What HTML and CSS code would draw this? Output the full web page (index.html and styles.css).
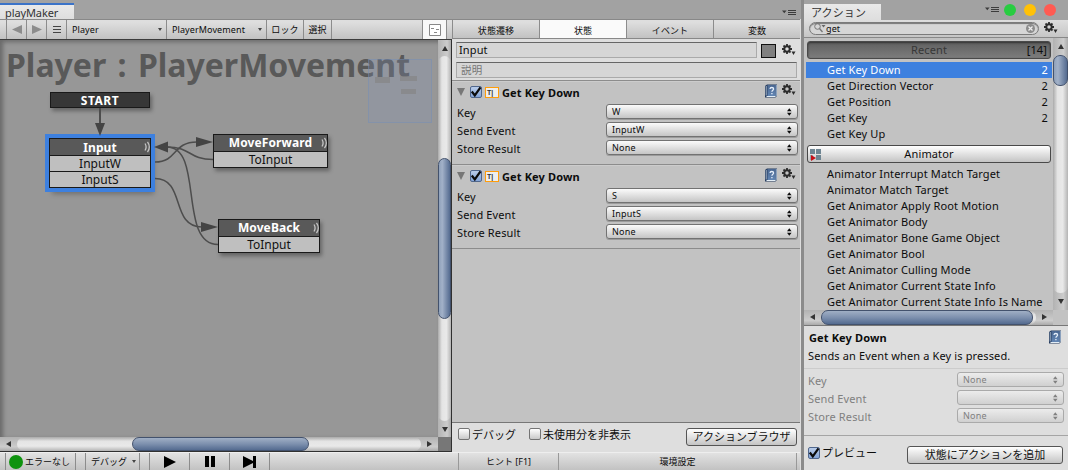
FILE: index.html
```html
<!DOCTYPE html>
<html lang="ja">
<head>
<meta charset="utf-8">
<title>playMaker</title>
<link rel="stylesheet" href="styles.css">
</head>
<body>
<svg class="defs" width="0" height="0">
  <defs>
    <symbol id="gear" viewBox="0 0 14 13">
      <circle cx="5" cy="5" r="2.700" fill="none" stroke="#2c2c2c" stroke-width="1.900"/>
      <g stroke="#2c2c2c" stroke-width="1.800"><path d="M5 0v2M5 8v2M0 5h2M8 5h2M1.500 1.500l1.400 1.400M7.100 7.100l1.400 1.400M8.500 1.500L7.100 2.900M2.900 7.100L1.500 8.500"/></g>
      <path d="M9.500 7.500h4L11.500 11z" fill="#2c2c2c"/>
    </symbol>
    <linearGradient id="bookfill" x1="0" y1="0" x2="0" y2="1"><stop offset="0" stop-color="#4a6791"/><stop offset="1" stop-color="#6286b4"/></linearGradient>
    <symbol id="book" viewBox="0 0 14 14">
      <path d="M1 2L3 .5H13v11.300L11.500 13.500H1z" fill="#263c5e"/>
      <path d="M3.500 1h8.200V12H3.500z" fill="url(#bookfill)"/>
      <path d="M2.200 2v9.500" stroke="#c3d3e6" stroke-width=".8"/>
      <path d="M2.500 12.500H11.300l1-1" fill="none" stroke="#e3edf5" stroke-width="1"/>
      <path d="M12.300 1v10.500" stroke="#a6bbd5"/>
      <path d="M6 5c.1-2 3.600-2 3.600.1 0 1.200-1.700 1.200-1.700 2.700M7.900 9v1.300" fill="none" stroke="#e6effa" stroke-width="1.300"/>
    </symbol>
    <symbol id="check" viewBox="0 0 14 14"><path d="M2.800 6.500l3 3.900L11.500 2.300" fill="none" stroke="#0b0b0b" stroke-width="2.200"/></symbol>
    <symbol id="updown" viewBox="0 0 5 8"><path d="M0 3.200h4.600L2.300 .2zM0 4.800h4.600L2.300 7.800z" fill="currentColor"/></symbol>
    <symbol id="menu" viewBox="0 0 14 7"><path d="M0 1.500h4.600L2.300 4.200z" fill="#3c3c3c"/><path d="M6 1.500h8M6 3.500h8M6 5.500h8" stroke="#3c3c3c" stroke-width="1"/></symbol>
    <symbol id="waves" viewBox="0 0 8 12"><path d="M2 2.500q2.200 3.500 0 7M4.500 .8q3.600 5 0 10.400" fill="none" stroke="#c4c4c4" stroke-width="1.300"/></symbol>
  </defs>
</svg>
<div class="app">
  <section class="main">
    <header class="tabbar"><div class="tab tab-active">playMaker</div><svg class="tab-menu" width="14" height="7"><use href="#menu"/></svg></header>
    <div class="panes">
      <div class="graph-pane">
        <div class="toolbar">
          <span class="cell pad"></span>
          <span class="cell nav"><svg width="10" height="9"><path d="M0 4.500L10 0v9z" fill="#8c8c8c"/></svg></span>
          <span class="cell nav"><svg width="10" height="9"><path d="M10 4.500L0 0v9z" fill="#8c8c8c"/></svg></span>
          <span class="cell nav"><svg width="8" height="7"><path d="M0 .5h8M0 3.500h8M0 6.500h8" stroke="#444"/></svg></span>
          <span class="cell drop">Player<i class="caret"></i></span>
          <span class="cell drop">PlayerMovement<i class="caret"></i></span>
          <span class="cell lock">ロック</span>
          <span class="cell select">選択</span>
          <span class="cell spacer"></span>
          <span class="cell minimap-toggle"><svg width="12" height="12"><path d="M.5 .5h11v11H.5z" fill="#fff" stroke="#888"/><path d="M2 4.500h3M7 5.500h3M5 8.500h3" stroke="#888"/></svg></span>
        </div>
        <div class="graph">
          <div class="canvas">
            <div class="graph-title">Player : PlayerMovement</div>
            <div class="node start">START</div>
            <div class="node n-input"><div class="state">Input<svg class="waves" width="8" height="12"><use href="#waves"/></svg></div><div class="event">InputW</div><div class="event">InputS</div></div>
            <div class="node n-forward"><div class="state">MoveForward<svg class="waves" width="8" height="12"><use href="#waves"/></svg></div><div class="event">ToInput</div></div>
            <div class="node n-back"><div class="state">MoveBack<svg class="waves" width="8" height="12"><use href="#waves"/></svg></div><div class="event">ToInput</div></div>
            <svg class="edges" width="438" height="397">
              <g fill="none" stroke="#4d4d4d" stroke-width="1.500">
                <path d="M100 68V86" stroke-width="2"/>
                <path d="M155 122C178 122 172 102 197 102"/>
                <path d="M213 119.500C188 119.500 192 107 167 107"/>
                <path d="M155 138.500C186 138.500 170 187 202 187"/>
                <path d="M218 204.500C178 204.500 204 107 167 107"/>
              </g>
              <g fill="#444"><path d="M95 83h10l-5 13z"/><path d="M196 97l17 5-17 5z"/><path d="M168 101.500v11L154 107z"/><path d="M201 182l17 5-17 5z"/></g>
            </svg>
            <div class="minimap"><i class="m1"></i><i class="m2"></i><i class="m3"></i></div>
          </div>
          <div class="vscroll graph-v"><b class="arrow up"></b><div class="track"><div class="thumb"></div></div><b class="arrow down"></b></div>
          <div class="hscroll graph-h"><b class="arrow left"></b><div class="track"><div class="thumb"></div></div><b class="arrow right"></b></div>
          <div class="corner"></div>
        </div>
        <div class="statusbar">
          <span class="cell st-pad"></span>
          <span class="cell st-error"><i class="dot"></i>エラーなし</span>
          <span class="cell st-gap"></span>
          <span class="cell st-debug">デバッグ<i class="caret"></i></span>
          <span class="cell st-gap"></span>
          <span class="cell st-btn"><svg width="12" height="12"><path d="M0 0l12 6-12 6z"/></svg></span>
          <span class="cell st-btn"><svg width="10" height="11"><path d="M0 0h4v11H0zM6 0h4v11H6z"/></svg></span>
          <span class="cell st-btn"><svg width="13" height="12"><path d="M0 0l10 5V0h3v12h-3V7L0 12z"/></svg></span>
        </div>
      </div>

      <div class="inspector">
        <nav class="tabs"><span>状態遷移</span><span class="on">状態</span><span>イベント</span><span>変数</span></nav>
        <div class="state-head">
          <div class="line"><div class="field name">Input</div><i class="swatch"></i><svg width="14" height="13"><use href="#gear"/></svg></div>
          <div class="field desc">説明</div>
        </div>
        <div class="action">
          <div class="action-title"><i class="fold"></i><span class="check on"><svg width="14" height="14"><use href="#check"/></svg></span><span class="kind">T|</span><strong>Get Key Down</strong><svg class="book" width="14" height="14"><use href="#book"/></svg><svg class="gear" width="14" height="13"><use href="#gear"/></svg></div>
          <div class="prop"><label>Key</label><div class="popup">W<svg width="5" height="8"><use href="#updown"/></svg></div></div>
          <div class="prop"><label>Send Event</label><div class="popup">InputW<svg width="5" height="8"><use href="#updown"/></svg></div></div>
          <div class="prop"><label>Store Result</label><div class="popup">None<svg width="5" height="8"><use href="#updown"/></svg></div></div>
        </div>
        <div class="action">
          <div class="action-title"><i class="fold"></i><span class="check on"><svg width="14" height="14"><use href="#check"/></svg></span><span class="kind">T|</span><strong>Get Key Down</strong><svg class="book" width="14" height="14"><use href="#book"/></svg><svg class="gear" width="14" height="13"><use href="#gear"/></svg></div>
          <div class="prop"><label>Key</label><div class="popup">S<svg width="5" height="8"><use href="#updown"/></svg></div></div>
          <div class="prop"><label>Send Event</label><div class="popup">InputS<svg width="5" height="8"><use href="#updown"/></svg></div></div>
          <div class="prop"><label>Store Result</label><div class="popup">None<svg width="5" height="8"><use href="#updown"/></svg></div></div>
        </div>
        <div class="blank"></div>
        <div class="options"><span class="check"></span><label class="o1">デバッグ</label><span class="check"></span><label>未使用分を非表示</label><button class="btn browser">アクションブラウザ</button></div>
        <div class="hints"><span class="hint-pad"></span><span class="hint">ヒント [F1]</span><span class="prefs">環境設定</span><span class="hint-end"></span></div>
      </div>
    </div>
  </section>

  <section class="browser-window">
    <header class="tabbar"><div class="tab">アクション</div><svg class="tab-menu" width="14" height="7"><use href="#menu"/></svg><i class="light green"></i><i class="light yellow"></i><i class="light red"></i></header>
    <div class="searchbar">
      <div class="search"><svg width="12" height="10"><circle cx="3.500" cy="3.500" r="2.800" fill="none" stroke="#777"/><path d="M5.500 5.500L8.500 9" stroke="#777" stroke-width="1.300"/><path d="M7.500 2h4L9.500 4.500z" fill="#666"/></svg><span>get</span><svg class="clear" width="9" height="9"><circle cx="4.500" cy="4.500" r="4.500" fill="#8c8c8c"/><path d="M2.500 2.500l4 4M6.500 2.500l-4 4" stroke="#eee" stroke-width="1.300"/></svg></div>
      <svg width="14" height="13"><use href="#gear"/></svg>
    </div>
    <div class="list-area">
      <div class="list">
        <div class="cat recent"><span>Recent</span><em>[14]</em></div>
        <ul>
          <li class="sel">Get Key Down<em>2</em></li><li>Get Direction Vector<em>2</em></li><li>Get Position<em>2</em></li><li>Get Key<em>2</em></li><li>Get Key Up</li>
        </ul>
        <div class="cat btn-cat"><svg width="12" height="12"><path d="M0 0h5v5H0zM6 0h5v5H6zM6 6h5v5H6z" fill="#6e8592"/><path d="M0 6h3v5H0z" fill="#9aa5ab"/><path d="M1 6l5 3-5 3z" fill="#c80f17"/></svg><span>Animator</span></div>
        <ul>
          <li>Animator Interrupt Match Target</li><li>Animator Match Target</li><li>Get Animator Apply Root Motion</li><li>Get Animator Body</li><li>Get Animator Bone Game Object</li><li>Get Animator Bool</li><li>Get Animator Culling Mode</li><li>Get Animator Current State Info</li><li>Get Animator Current State Info Is Name</li>
        </ul>
      </div>
      <div class="vscroll list-v"><b class="arrow up"></b><div class="track"><div class="thumb"></div></div><b class="arrow down"></b></div>
      <div class="hscroll list-h"><b class="arrow left"></b><div class="track"><div class="thumb"></div></div><b class="arrow right"></b></div>
      <div class="corner"></div>
    </div>
    <div class="about">
      <div class="about-title"><strong>Get Key Down</strong><svg width="14" height="14"><use href="#book"/></svg></div>
      <p>Sends an Event when a Key is pressed.</p>
    </div>
    <div class="preview">
      <div class="prop"><label>Key</label><div class="popup">None<svg width="5" height="8"><use href="#updown"/></svg></div></div>
      <div class="prop"><label>Send Event</label><div class="popup"><svg width="5" height="8"><use href="#updown"/></svg></div></div>
      <div class="prop"><label>Store Result</label><div class="popup">None<svg width="5" height="8"><use href="#updown"/></svg></div></div>
    </div>
    <div class="add"><span class="check on"><svg width="14" height="14"><use href="#check"/></svg></span><label>プレビュー</label><button class="btn">状態にアクションを追加</button></div>
  </section>
</div>
</body>
</html>
```
FILE: styles.css
```css
* { box-sizing: border-box; }
body { margin: 0; background: #a2a2a2; color: #0c0c0c; font: 11px/14px "Noto Sans", "Noto Sans CJK JP", sans-serif; letter-spacing: .13px; white-space: nowrap; overflow: hidden; }
svg { display: block; flex: none; overflow: visible; }
i, em { font-style: normal; }
.defs { position: absolute; }
.app { display: flex; width: 1068px; height: 470px; }
.main { display: flex; flex-direction: column; width: 804px; border-right: 3px solid #8b8b8b; background: #a2a2a2; }
.tabbar { display: flex; align-items: flex-end; height: 19px; background: #a2a2a2; }
.tab { height: 15px; padding: 1px 0 0 7px; width: 74px; background: linear-gradient(#e9e9e9, #dedede); color: #333; line-height: 15px; }
.tab-active { border-top: 1px solid #3b73c8; box-shadow: 0 -1px #3b73c8; padding: 0 0 0 5px; letter-spacing: -.1px; }
.tab-menu { margin: 0 5px 3px auto; }
.panes { display: flex; height: 451px; }
.graph-pane { display: flex; flex-direction: column; width: 452px; }
.inspector { display: flex; flex-direction: column; width: 349px; border-right: 1px solid #ddd; background: #c2c2c2; }
.toolbar, .tabs, .statusbar, .hints { display: flex; flex: none; background: linear-gradient(#e2e2e2, #c2c2c2); }
.toolbar, .tabs { height: 20px; border-top: 1px solid #888; border-bottom: 1px solid #888; box-shadow: inset 0 2px #dedede; font-size: 9px; line-height: 21px; letter-spacing: .1px; }
.toolbar { border-bottom: 0; }
.cell { display: flex; align-items: center; border-right: 1px solid #8c8c8c; flex: none; }
.pad { width: 7px; }
.nav { width: 20px; justify-content: center; }
.drop { width: 100px; padding: 0 4px 0 5px; justify-content: space-between; }
.caret { border: 2px solid transparent; border-top: 3px solid #444; border-bottom: 0; }
.lock { width: 37px; justify-content: center; }
.select { width: 28px; justify-content: center; }
.spacer { width: 91px; }
.minimap-toggle { width: 24px; justify-content: center; background: #f8f8f8; }
.graph { display: grid; grid-template: 397px 14px / 438px 13px; width: 452px; height: 413px; border-top: 1px solid #3c3c3c; border-right: 1px solid #303030; border-bottom: 2px solid #303030; background: #979797; }
.canvas { position: relative; overflow: hidden; background: #979797; box-shadow: inset 3px 2px 4px #6a6a6a; }
.graph-title { position: absolute; left: 6px; top: 0; color: #595959; font-size: 32px; line-height: 50px; font-weight: 700; letter-spacing: 0; word-spacing: 3px; }
.node { position: absolute; border: 1px solid #191919; background: #191919; color: #111; font-size: 12px; text-align: center; letter-spacing: 0; box-shadow: 2px 3px 4px #0005; }
.start { left: 50px; top: 52px; width: 100px; height: 16px; background: #373737; color: #fff; font-weight: 700; line-height: 15px; letter-spacing: .5px; }
.state { height: 16px; background: #595959; color: #fff; font-weight: 700; line-height: 15px; letter-spacing: .1px; }
.event { height: 15px; margin-top: 1px; background: #bfbfbf; line-height: 15px; }
.waves { position: absolute; right: -1px; top: 2px; }
.n-input { left: 49px; top: 98px; width: 102px; height: 50px; padding-right: 0; box-shadow: 0 0 0 4px #3d80df, 3px 6px 5px #0004; }
.n-input .state { line-height: 17px; }
.n-forward { left: 213px; top: 94px; width: 115px; height: 34px; }
.n-back { left: 218px; top: 179px; width: 102px; height: 34px; }
.edges { position: absolute; left: 0; top: 0; }
.minimap { position: absolute; left: 368px; top: 19px; width: 64px; height: 64px; border: 1px solid #718bb866; background: #8297bd38; }
.minimap i { position: absolute; background: #858585b0; height: 5px; }
.minimap .m1 { left: 6px; top: 17px; width: 15px; height: 6px; }
.minimap .m2 { left: 31px; top: 16px; width: 17px; }
.minimap .m3 { left: 32px; top: 29px; width: 15px; }
.vscroll, .hscroll { display: flex; background: #c8c8c8; }
.vscroll { flex-direction: column; background: linear-gradient(90deg, #b2b2b2, #ccc 70%, #aaa); }
.hscroll { background: linear-gradient(#b2b2b2, #ccc 70%, #aaa); }
.track { flex: 1; display: flex; border-radius: 7px; background: linear-gradient(90deg, #aaa, #e4e4e4 30%, #e9e9e9 65%, #b4b4b4); }
.vscroll .track { flex-direction: column; }
.hscroll .track { background: linear-gradient(#aaa, #e4e4e4 30%, #e9e9e9 65%, #b4b4b4); }
.thumb { border: 1px solid #43526d; border-radius: 7px; background: linear-gradient(90deg, #8fa1ba, #a2b1c8 30%, #546b90); }
.hscroll .thumb { background: linear-gradient(#a0afc5, #7d90ae 50%, #546b90); }
.arrow { flex: none; width: 13px; height: 16px; display: flex; align-items: center; justify-content: center; }
.hscroll .arrow { width: 17px; height: 14px; }
.arrow::after { content: ""; border: 3.500px solid transparent; }
.up::after { border-top: 0; border-bottom: 5px solid #333; }
.down::after { border-bottom: 0; border-top: 5px solid #333; }
.left::after { border-left: 0; border-right: 5px solid #333; }
.right::after { border-right: 0; border-left: 5px solid #333; }
.graph-v .thumb { margin-top: 102px; height: 161px; }
.graph-h .thumb { margin-left: 115px; width: 177px; }
.graph .corner { background: #777; }
.statusbar { height: 18px; border-top: 1px solid #eee; font-size: 9px; letter-spacing: 0; }
.st-pad { width: 6px; }
.st-error { width: 70px; padding-left: 3px; gap: 2px; }
.dot { flex: none; width: 14px; height: 14px; border-radius: 50%; background: #0f930f; }
.st-gap { width: 10px; }
.st-debug { width: 54px; padding-left: 5px; gap: 5px; }
.st-btn { width: 40px; justify-content: center; }

.tabs span { flex: 1; border-left: 1px solid #8c8c8c; text-align: center; }
.tabs .on { background: #fafafa; }
.state-head { height: 42px; padding: 3px 3px 0 4px; background: #dedede; border-bottom: 1px solid #8c8c8c; }
.line { display: flex; gap: 4px; align-items: center; height: 16px; margin-bottom: 4px; }
.field { height: 16px; border: 1px solid #aaa; border-top-color: #666; background: #d6d6d6; padding-left: 2px; line-height: 14px; }
.name { width: 301px; }
.desc { color: #777; padding-left: 4px; font-size: 10.500px; }
.swatch { width: 15px; height: 14px; border: 1px solid #111; background: #808080; margin-top: 2px; }
.line svg { margin: 0 0 0 2px; }
.action { height: 84px; padding: 4px 2px 0 5px; border-bottom: 1px solid #8c8c8c; box-shadow: inset 0 1px #ccc; }
.action-title { display: flex; align-items: center; height: 15px; margin-bottom: 3px; }
.action strong { flex: 1; margin-left: 3px; }
strong { font-weight: 700; }
.fold { border: 4.500px solid transparent; border-top: 8px solid #777; border-bottom: 0; margin: -2px 5px 0 0; }
.check { flex: none; width: 12px; height: 12px; border: 1px solid #747474; border-radius: 2px; background: linear-gradient(#fff, #c9c9c9); }
.check.on { background: linear-gradient(#b9cce9, #84a5d8); border-color: #50678d; }
.check svg { margin: -2px 0 0 -2px; }
.action .check { margin-top: -1px; }
.kind { flex: none; width: 14px; height: 11px; margin: -1px 0 0 3px; border: 1px solid #ff9d0a; background: #eee; color: #333; font: 700 7px/9px "Liberation Sans", sans-serif; letter-spacing: 0; padding-left: 1px; }
.action .book { margin-top: -3px; }
.action .gear { margin: -4px 2px 0 4px; }
.prop { display: flex; height: 18px; }
.prop label { flex: 1; line-height: 20px; }
.prop:nth-child(2) label { line-height: 19px; }
.popup { display: flex; justify-content: space-between; align-items: center; width: 192px; height: 15px; margin-top: 1px; padding: 0 5px; border: 1px solid #727272; border-radius: 3px; background: linear-gradient(#fbfbfb, #c5c5c5); box-shadow: 0 1px #0003; font-size: 9px; letter-spacing: .2px; }
.popup svg { margin-left: auto; }
.blank { flex: 1; }
.options { display: flex; height: 30px; padding: 5px 3px 0 6px; border-top: 1px solid #777; background: #dedede; letter-spacing: 0; }
.options .check { margin-right: 2px; }
.options label { line-height: 13px; }
.options .o1 { width: 57px; }
.btn { margin-left: auto; height: 18px; padding: 0; border: 1px solid #555; border-radius: 3px; background: linear-gradient(#fff, #c4c4c4); color: #111; font: inherit; line-height: 16px; }
.browser { width: 111px; }
.hints { height: 18px; border-top: 1px solid #eee; font-size: 9px; line-height: 18px; text-align: center; letter-spacing: 0; }
.hints span { border-right: 1px solid #999; }
.hint-pad { width: 7px; }
.hint { width: 100px; }
.prefs { flex: 1; padding-right: 0; }
.hint-end { width: 3px; }
.hints .hint-end { border: 0; }

.browser-window { display: flex; flex-direction: column; width: 264px; background: #c2c2c2; }
.browser-window .tabbar { height: 20px; }
.browser-window .tab { height: 16px; width: 77px; }
.browser-window .tab-menu { margin: 0 5px 7px auto; }
.light { width: 12px; height: 12px; margin: 0 8px 4px 0; border-radius: 50%; }
.green { background: #28cd41; }
.yellow { background: #ffc107; }
.red { background: #ff5b52; margin-right: 12px; }
.searchbar { display: flex; align-items: center; height: 18px; padding: 0 10px 1px 5px; gap: 5px; border-bottom: 1px solid #888; background: linear-gradient(#dedede, #c6c6c6); }
.search { display: flex; align-items: center; width: 230px; height: 13px; padding: 0 3px 0 4px; border: 1px solid #7b7b7b; border-radius: 7px; background: #d6d6d6; box-shadow: inset 0 1px 1px #777; font-size: 9px; }
.search span { margin-top: 1px; }
.search .clear { margin-left: auto; }
.list-area { display: grid; grid-template: 272px 15px / 249px 15px; height: 287px; }
.list { overflow: hidden; padding: 3px 1px 0 2px; }
.cat { position: relative; width: 244px; height: 18px; margin-left: 1px; border: 1px solid #494949; border-radius: 3px; text-align: center; line-height: 16px; }
.recent { background: linear-gradient(#606060, #7c7c7c); color: #373737; box-shadow: inset 0 1px 2px #333; }
.recent em { position: absolute; right: 3px; color: #0c0c0c; }
.btn-cat { background: linear-gradient(#fff, #c4c4c4); }
.btn-cat svg { position: absolute; left: 2px; top: 3px; }
ul { margin: 3px 0; padding: 0; list-style: none; }
li { display: flex; justify-content: space-between; height: 16px; padding: 0 4px 0 21px; line-height: 15px; }
.sel { background: #3d80df; color: #fff; }
.list-v .arrow { width: 15px; height: 17px; }
.list-v .thumb { height: 31px; }
.list-h .thumb { width: 212px; }
.about { height: 44px; padding: 4px 6px 0 5px; border-top: 1px solid #777; background: #dedede; border-bottom: 1px solid #ccc; }
.about-title { display: flex; justify-content: space-between; height: 16px; line-height: 15px; }
p { margin: 2px 0 0 -1px; line-height: 15px; }
.preview { height: 67px; padding: 2px 4px 0; border-bottom: 1px solid #a5a5a5; background: #dedede; color: #808080; }
.preview .popup { width: 107px; border-color: #aaa; background: linear-gradient(#ececec, #d0d0d0); box-shadow: none; }
.add { display: flex; flex: 1; padding: 10px 5px 0 4px; background: #dedede; letter-spacing: 0; }
.add .check { margin-top: 1px; }
.add label { margin-left: 2px; line-height: 14px; }
.add .btn { width: 156px; }
```
